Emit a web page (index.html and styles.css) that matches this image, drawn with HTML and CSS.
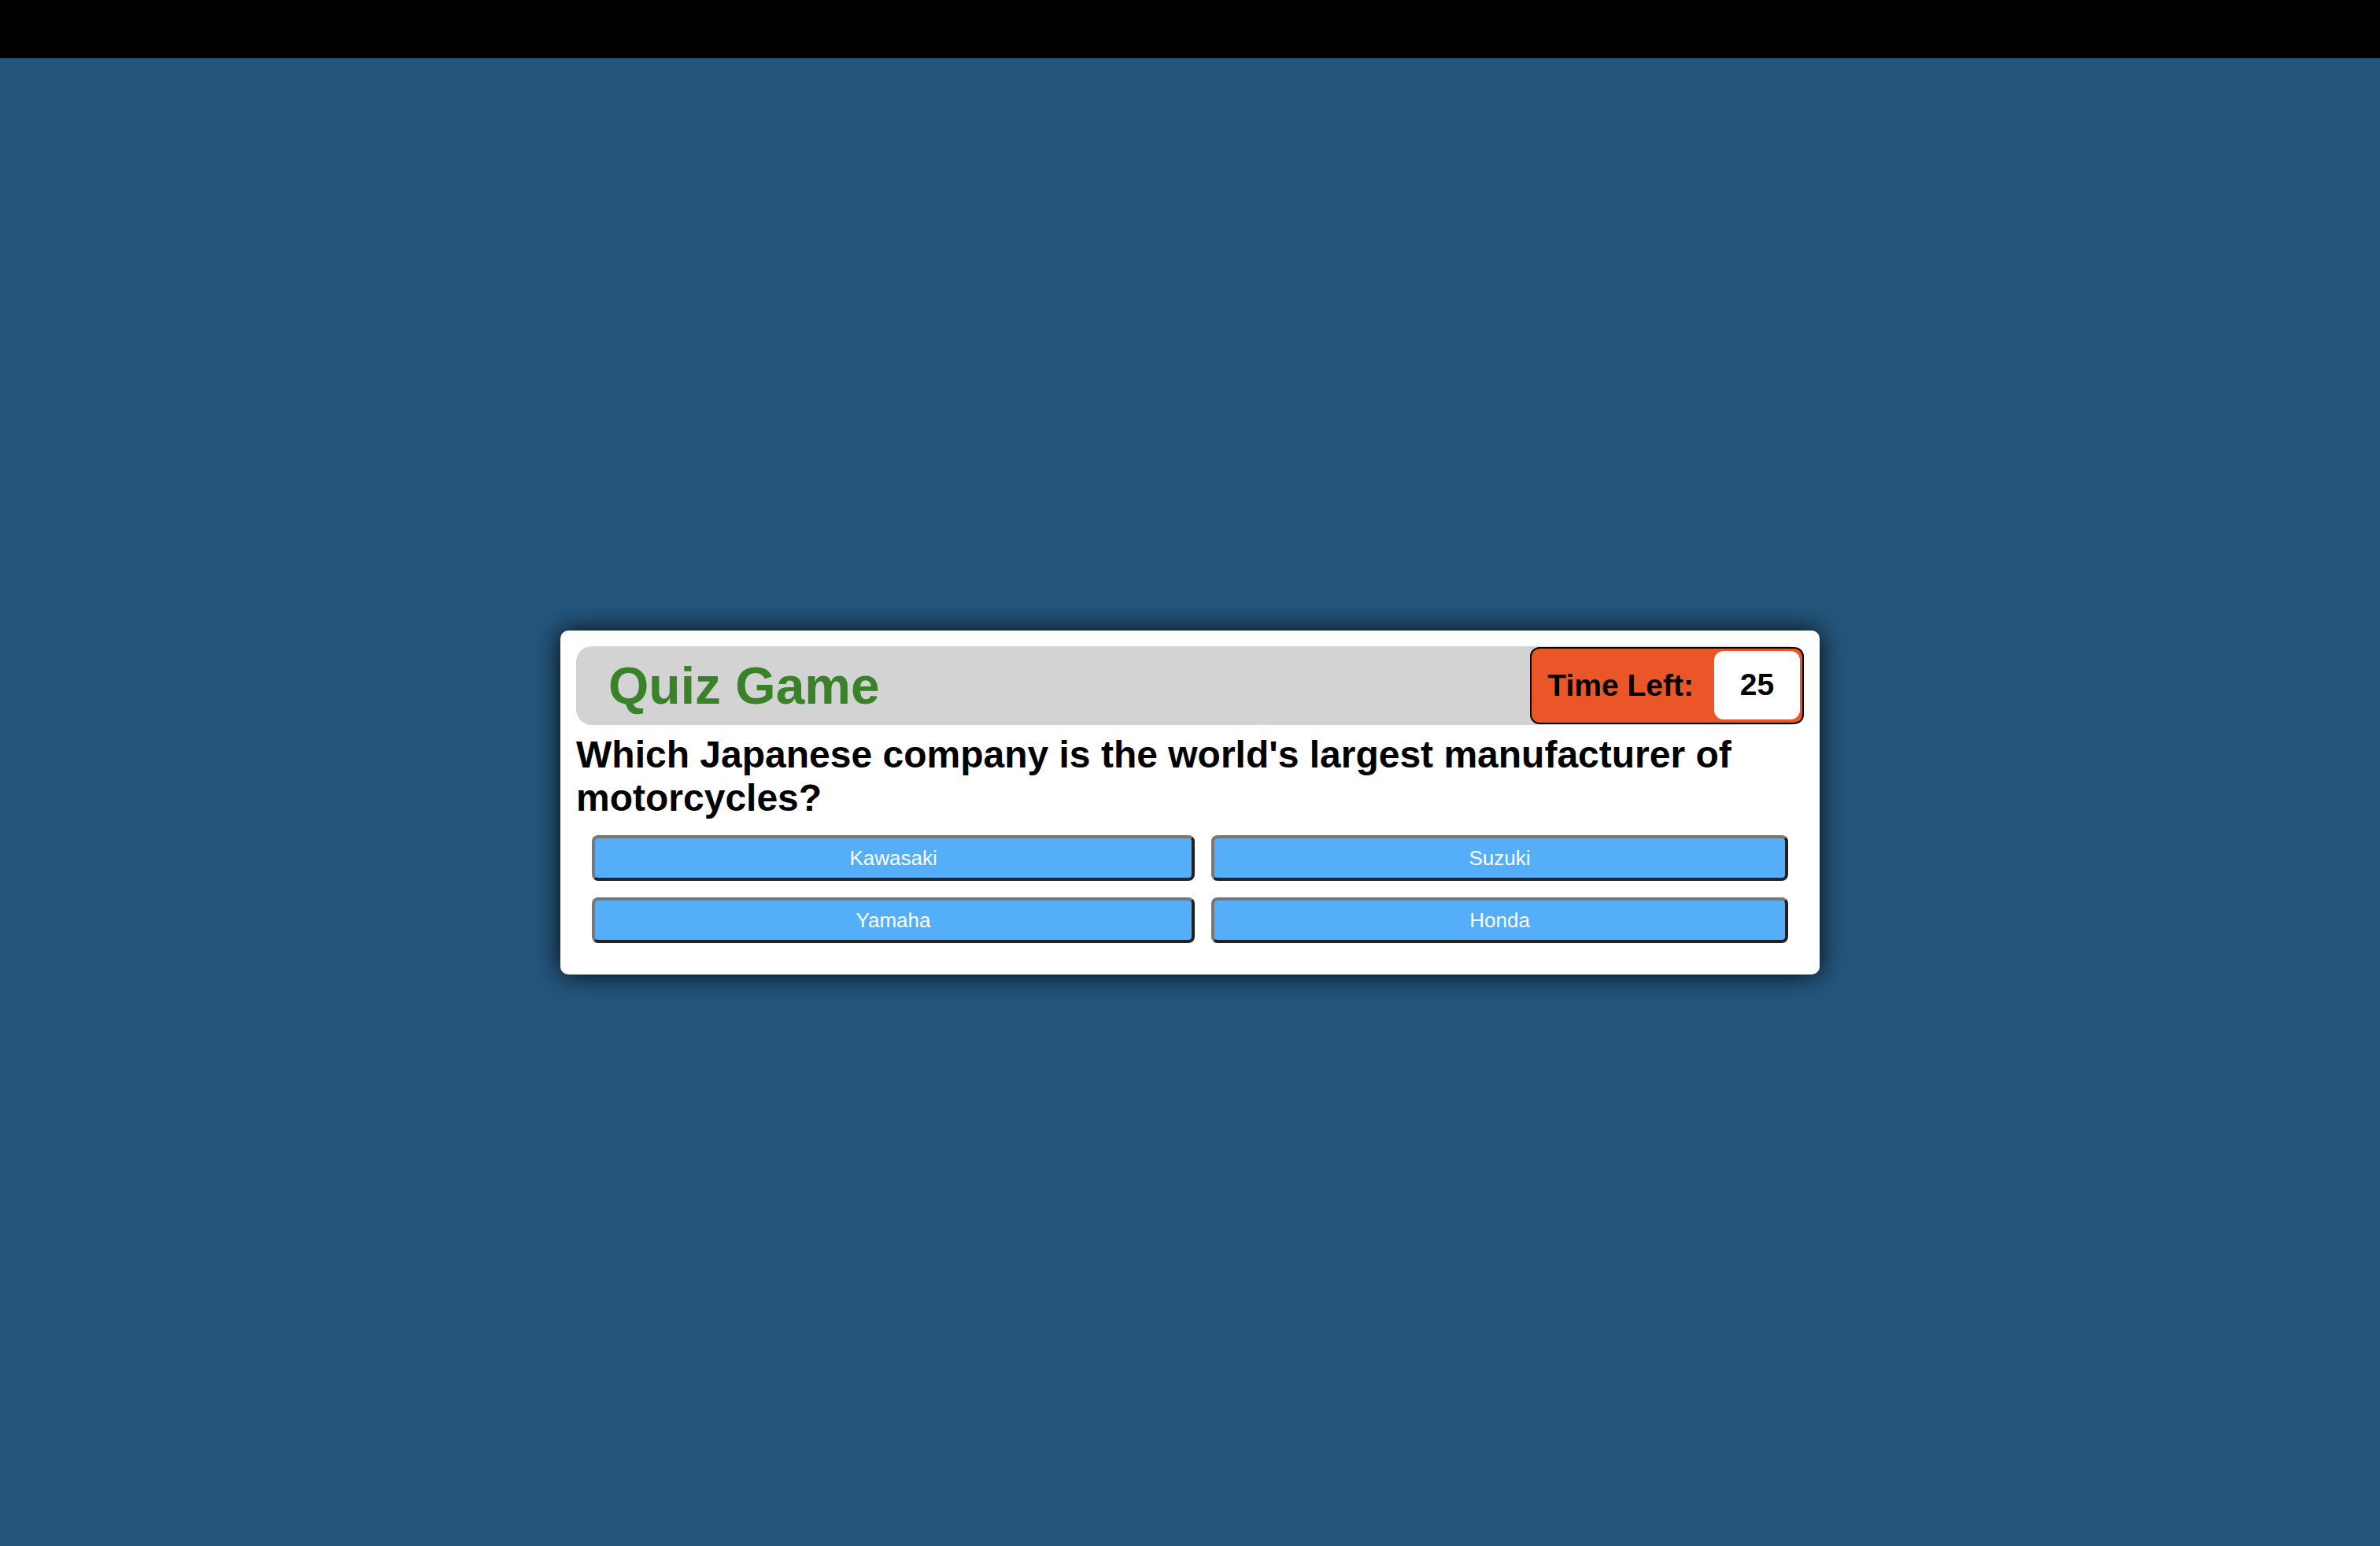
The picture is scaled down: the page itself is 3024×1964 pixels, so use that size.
FILE: index.html
```html
<!DOCTYPE html>
<html lang="en">
<head>
<meta charset="utf-8">
<title>Quiz Game</title>
<link rel="stylesheet" href="styles.css">
</head>
<body>
<div class="topbar"></div>
<main class="stage">
  <section class="card">
    <header class="card-head">
      <h1 class="title">Quiz Game</h1>
      <div class="timer">
        <span class="timer-label">Time Left:</span>
        <span class="timer-value">25</span>
      </div>
    </header>
    <h2 class="question">Which Japanese company is the world's largest manufacturer of motorcycles?</h2>
    <div class="answers">
      <button class="answer">Kawasaki</button>
      <button class="answer">Suzuki</button>
      <button class="answer">Yamaha</button>
      <button class="answer">Honda</button>
    </div>
  </section>
</main>
</body>
</html>
```
FILE: styles.css
```css
html, body {
  margin: 0;
  padding: 0;
}
body {
  background: #24557c;
  font-family: "Liberation Sans", Arial, Helvetica, sans-serif;
}
.topbar {
  height: 74px;
  background: #000;
}
.stage {
  height: 1890px;
  display: flex;
  align-items: center;
  justify-content: center;
}
.card {
  width: 1600px;
  box-sizing: border-box;
  padding: 20px;
  background: #fff;
  border-radius: 10px;
  box-shadow: 0 0 32px rgba(0, 0, 0, 0.9);
}
.card-head {
  height: 100px;
  display: flex;
  align-items: center;
  justify-content: space-between;
  background: #d3d3d3;
  border-radius: 20px;
}
.title {
  margin: 0;
  padding-left: 41px;
  font-size: 66px;
  font-weight: bold;
  color: #3a8227;
}
.timer {
  height: 98px;
  box-sizing: border-box;
  display: flex;
  align-items: center;
  background: #eb5628;
  border: 2px solid #000;
  border-radius: 12px;
  padding-left: 20px;
}
.timer-label {
  font-size: 39px;
  font-weight: bold;
  color: #000;
  margin-right: 26px;
}
.timer-value {
  width: 109px;
  height: 87px;
  margin-right: 3px;
  margin-bottom: 1px;
  display: flex;
  align-items: center;
  justify-content: center;
  background: #fff;
  border-radius: 12px;
  font-size: 39px;
  font-weight: bold;
  color: #000;
}
.question {
  margin: 10px 0 0;
  font-size: 48px;
  font-weight: bold;
  color: #000;
}
.answers {
  margin: 20px;
  display: grid;
  grid-template-columns: auto auto;
  gap: 21px;
}
.answer {
  height: 58px;
  padding: 10px 20px;
  box-sizing: border-box;
  background: #54aff8;
  border: 4px solid;
  border-color: #777 #222 #222 #777;
  border-radius: 8px;
  color: #fff;
  font-family: "Liberation Sans", Arial, Helvetica, sans-serif;
  font-size: 26px;
  cursor: pointer;
}
```
